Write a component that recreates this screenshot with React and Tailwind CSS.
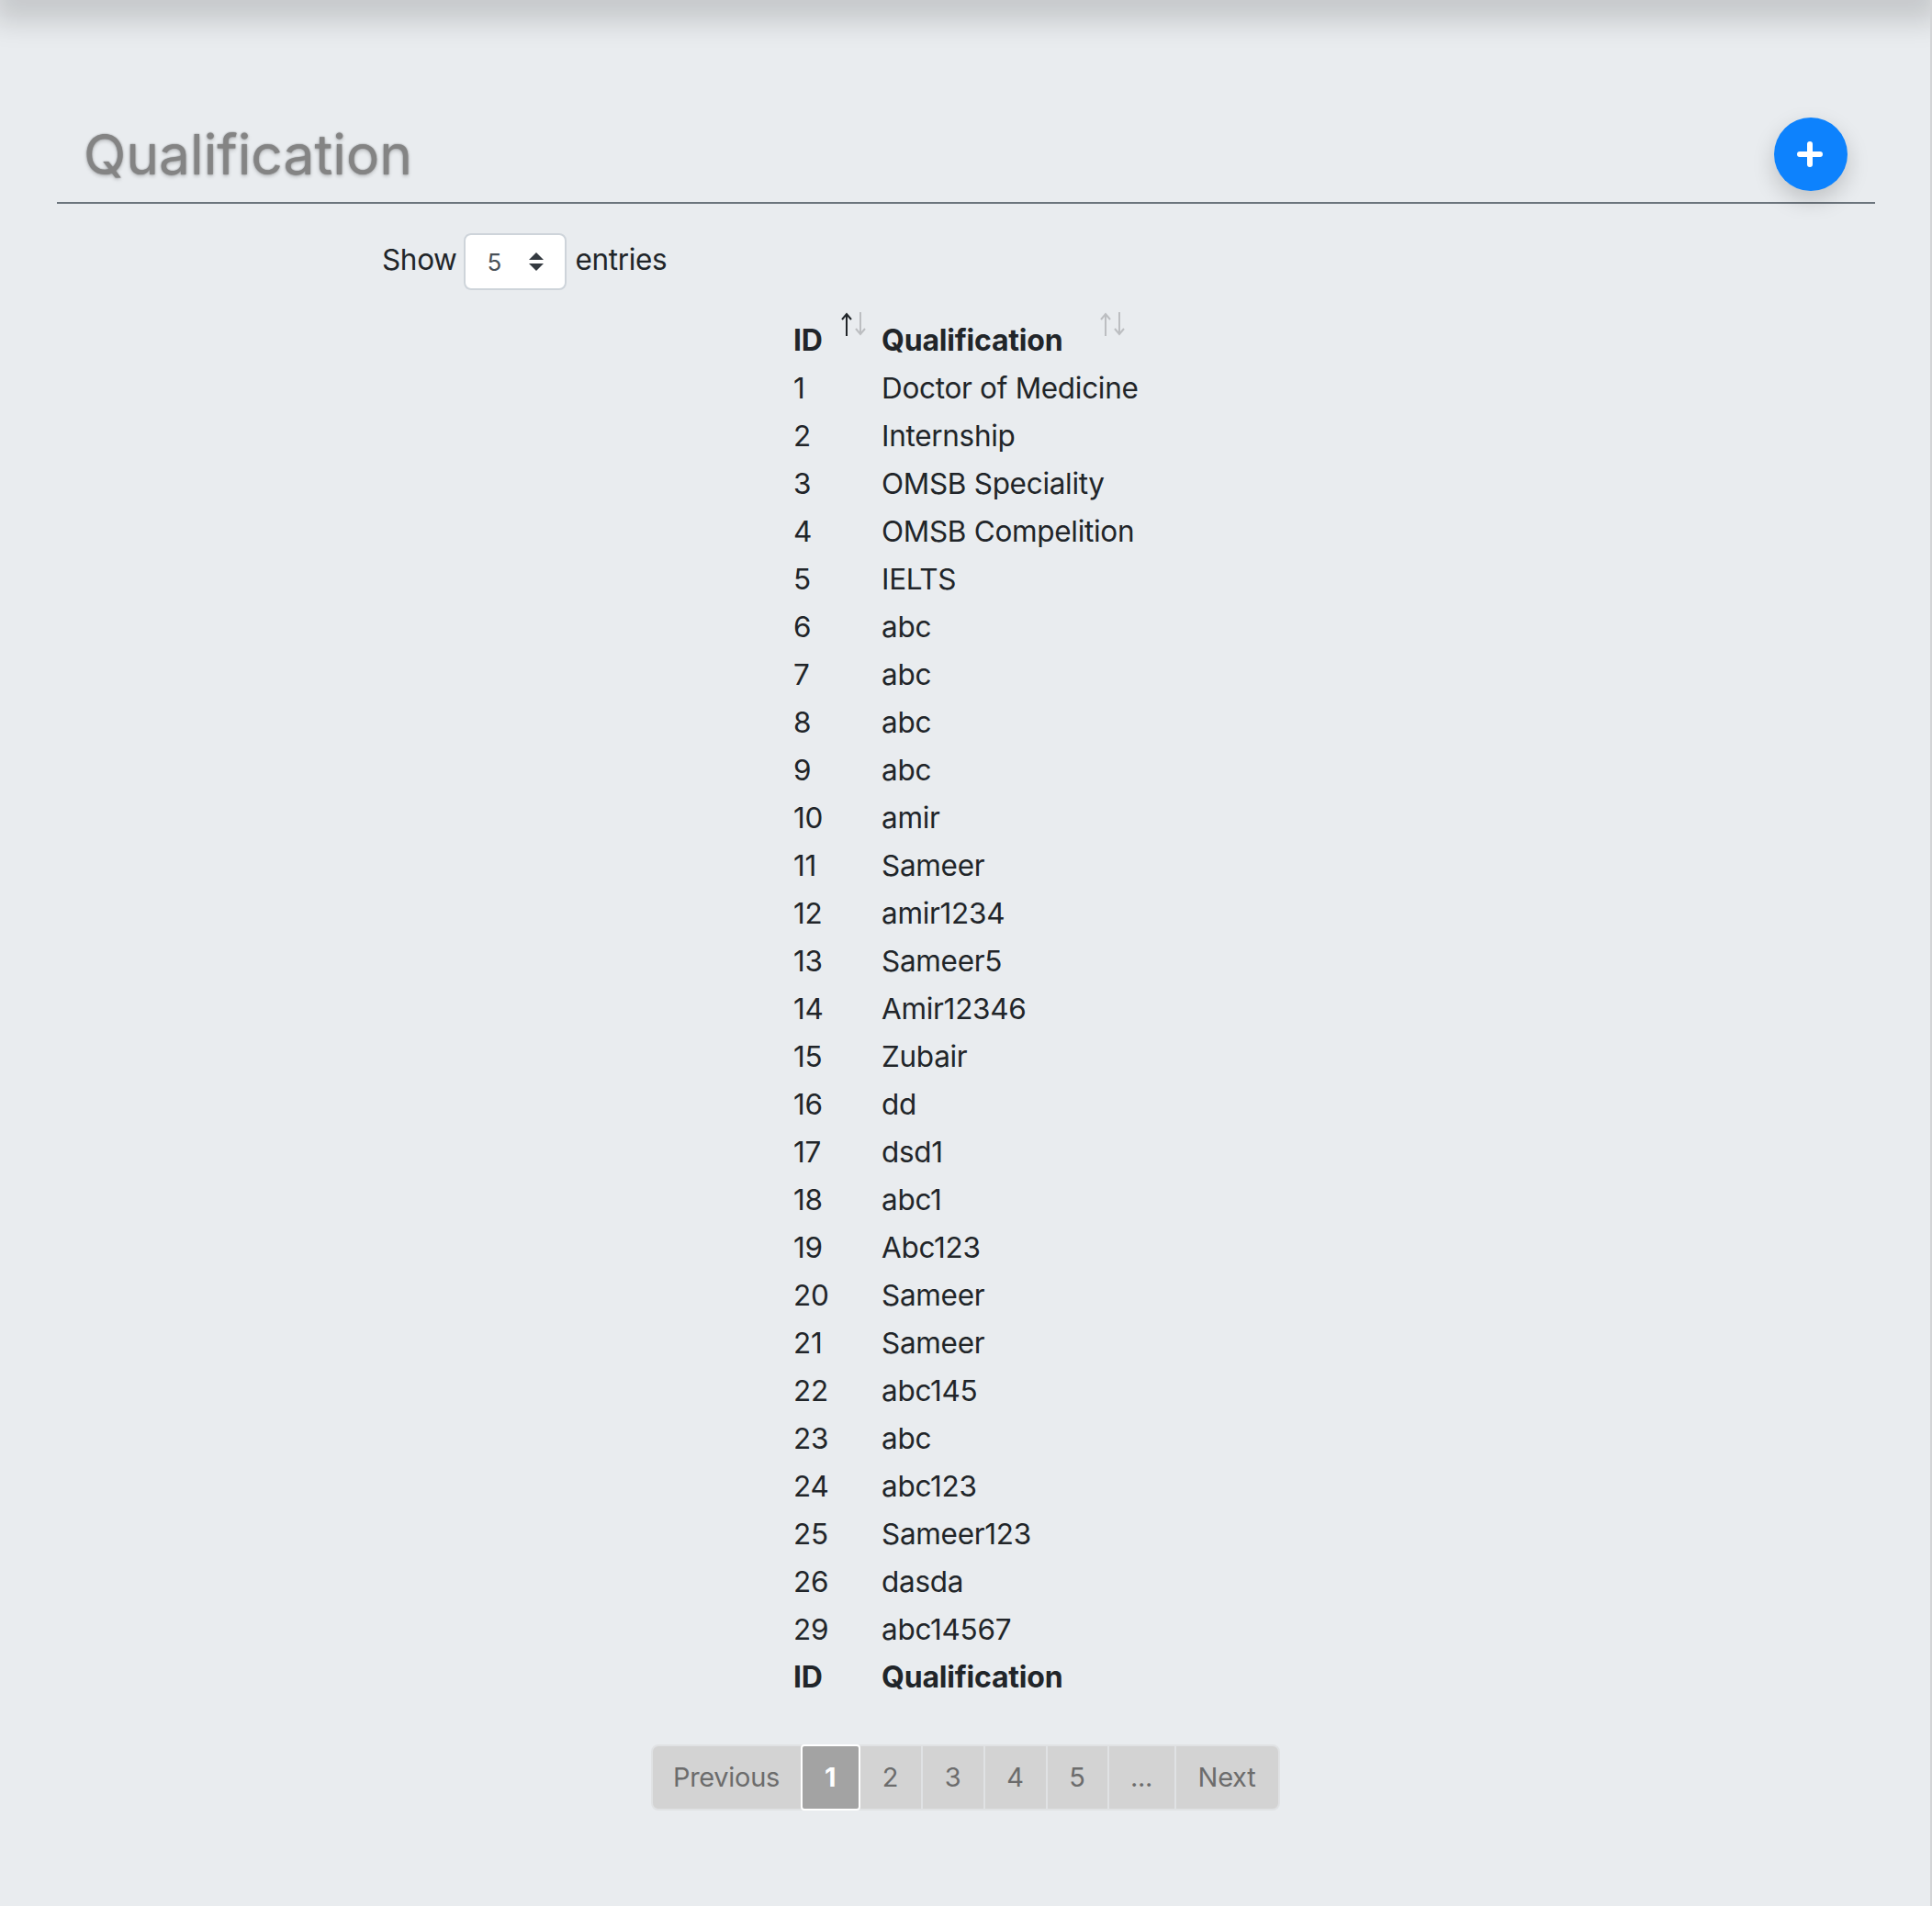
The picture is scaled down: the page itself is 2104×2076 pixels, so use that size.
import React from 'react';

const rows = [
  [1, 'Doctor of Medicine'], [2, 'Internship'], [3, 'OMSB Speciality'], [4, 'OMSB Compelition'],
  [5, 'IELTS'], [6, 'abc'], [7, 'abc'], [8, 'abc'], [9, 'abc'], [10, 'amir'], [11, 'Sameer'],
  [12, 'amir1234'], [13, 'Sameer5'], [14, 'Amir12346'], [15, 'Zubair'], [16, 'dd'], [17, 'dsd1'],
  [18, 'abc1'], [19, 'Abc123'], [20, 'Sameer'], [21, 'Sameer'], [22, 'abc145'], [23, 'abc'],
  [24, 'abc123'], [25, 'Sameer123'], [26, 'dasda'], [29, 'abc14567'],
];

const Arrow = ({ up, className }) => (
  <svg width="14" height="26" viewBox="0 0 14 26" fill="none" stroke="currentColor" strokeWidth="2" className={className}>
    {up ? <path d="M7 26V2M2 8l5-6 5 6" /> : <path d="M7 0v24M2 18l5 6 5-6" />}
  </svg>
);

const SortIcons = ({ active, left }) => (
  <div className={`absolute -top-[5px] flex gap-[1px] ${left}`}>
    <Arrow up className={active ? 'text-[#212529]' : 'text-[#bcbec1]'} />
    <Arrow className="text-[#bcbec1]" />
  </div>
);

const pageBtn = 'h-full flex items-center justify-center border-l-2 border-[#e0e2e4]';

export default function App() {
  return (
    <div className="relative h-[2076px] bg-[#e9ecef] text-[#212529] font-['Inter','Liberation_Sans',sans-serif] overflow-hidden">
      <div className="absolute -top-[20px] left-[10px] right-[8px] h-[20px] shadow-[0_6px_30px_18px_rgba(0,0,0,0.15)]" />
      <div className="absolute top-0 right-0 bottom-0 w-[2px] bg-[#d2d3d5]" />

      <div className="pt-[120px] pl-[62px] pr-[62px]">
        <div className="relative h-[102px] border-b-2 border-[#6c757d]">
          <h1 className="pl-[29px] text-[60.5px] leading-[96px] text-[#848484] [text-shadow:0_0_2px_rgba(0,0,0,0.4),0_2px_4px_rgba(0,0,0,0.2)]">
            Qualification
          </h1>
          <button className="absolute right-[30px] top-[8px] w-[80px] h-[80px] rounded-full bg-[#0d82fd] flex items-center justify-center shadow-[0_10px_24px_rgba(0,0,0,0.18)]">
            <svg width="28" height="28" viewBox="0 0 28 28" fill="none" stroke="#fff" strokeWidth="6" strokeLinecap="round" className="-ml-[2px]">
              <path d="M14 3v22M3 14h22" />
            </svg>
          </button>
        </div>
      </div>

      <div className="flex items-start pl-[416px] pt-[32px] text-[31.5px] tracking-[-0.35px] leading-[57px]">
        <span>Show</span>
        <div className="ml-[7px] mr-[10px] w-[112px] h-[62px] bg-white border-2 border-[#ced4da] rounded-[8px] flex items-center justify-between pl-[24px] pr-[23px] text-[#495057] text-[26px]">
          <span>5</span>
          <svg width="16" height="20" viewBox="0 0 16 20" fill="#343a40">
            <path d="M8 0l8 8H0zM8 20l8-8H0z" />
          </svg>
        </div>
        <span>entries</span>
      </div>

      <div className="flex justify-center mt-[29px]">
        <table className="table-fixed w-[376px] text-[31.5px] tracking-[-0.3px] leading-[48px] border-collapse">
          <thead>
            <tr className="h-[52px]">
              <th className="relative w-[96px] p-0 text-left font-bold text-[32px] tracking-[-0.2px]">
                ID
                <SortIcons active left="left-[51px]" />
              </th>
              <th className="relative p-0 text-left font-bold text-[32px] tracking-[-0.2px]">
                Qualification
                <SortIcons left="left-[237px]" />
              </th>
            </tr>
          </thead>
          <tbody>
            {rows.map(([id, name]) => (
              <tr key={id} className="h-[52px]">
                <td className="p-0">{id}</td>
                <td className="p-0 whitespace-nowrap">{name}</td>
              </tr>
            ))}
          </tbody>
          <tfoot>
            <tr className="h-[52px]">
              <th className="p-0 text-left font-bold text-[32px] tracking-[-0.2px]">ID</th>
              <th className="p-0 text-left font-bold text-[32px] tracking-[-0.2px]">Qualification</th>
            </tr>
          </tfoot>
        </table>
      </div>

      <div className="flex justify-center mt-[47px] pr-[2px]">
        <div className="flex items-center h-[72px] rounded-[8px] bg-[#d3d3d3] border-2 border-[#e0e2e4] text-[29px] tracking-[-0.3px] text-[#6c6c6c]">
          <div className="w-[161px] h-full flex items-center justify-center">Previous</div>
          <div className="w-[65px] h-[72px] rounded-[4px] bg-[#a3a3a3] border-2 border-white text-white font-bold flex items-center justify-center">1</div>
          <div className="w-[66px] h-full flex items-center justify-center">2</div>
          <div className={`w-[68px] ${pageBtn}`}>3</div>
          <div className={`w-[68px] ${pageBtn}`}>4</div>
          <div className={`w-[67px] ${pageBtn}`}>5</div>
          <div className={`w-[73px] ${pageBtn}`}>...</div>
          <div className={`w-[113px] ${pageBtn}`}>Next</div>
        </div>
      </div>
    </div>
  );
}
